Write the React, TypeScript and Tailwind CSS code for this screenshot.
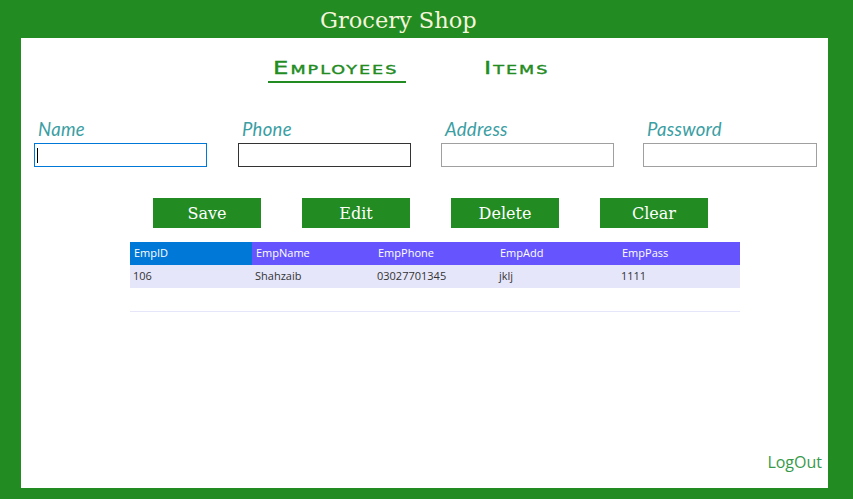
import React from "react";

const fields = [
  { label: "Name", left: "ml-[13px]", width: "w-[173px]", border: "border-[#0078d7]", caret: true },
  { label: "Phone", left: "ml-[31px]", width: "w-[173px]", border: "border-[#333333]", caret: false },
  { label: "Address", left: "ml-[30px]", width: "w-[173px]", border: "border-[#a0a0a0]", caret: false },
  { label: "Password", left: "ml-[29px]", width: "w-[174px]", border: "border-[#a0a0a0]", caret: false },
];

const buttons = ["Save", "Edit", "Delete", "Clear"];

const columns = ["EmpID", "EmpName", "EmpPhone", "EmpAdd", "EmpPass"];
const rows = [["106", "Shahzaib", "03027701345", "jklj", "1111"]];

const SmallCaps = ({ text }: { text: string }) => (
  <span className="inline-block origin-left scale-x-[1.35] [font-variant:small-caps] tracking-[1.5px] [-webkit-text-stroke:0.4px_#228b22] [font-family:'DejaVu_Sans',sans-serif] text-[18px] text-[#228b22]">
    {text}
  </span>
);

export default function App() {
  return (
    <div className="w-[853px] h-[499px] bg-[#228b22] flex flex-col overflow-hidden">
      <div className="h-[38px] pl-[320px] flex items-center">
        <h1 className="[font-family:'DejaVu_Serif',serif] text-[22.5px] text-[#f5f5dc] leading-none pt-[3px]">
          Grocery Shop
        </h1>
      </div>

      <div className="ml-[21px] w-[807px] h-[450px] bg-white flex flex-col relative">
        {/* tabs */}
        <div className="flex pt-[18px] h-[45px]">
          <div className="ml-[247px] w-[138px] flex flex-col">
            <div className="pl-[5px] h-[24px] leading-[24px]">
              <SmallCaps text="Employees" />
            </div>
            <div className="h-[2px] bg-[#228b22] mt-[1px]" />
          </div>
          <div className="ml-[78px] h-[24px] leading-[24px]">
            <SmallCaps text="Items" />
          </div>
        </div>

        {/* inputs */}
        <div className="flex mt-[36px]">
          {fields.map((f) => (
            <div key={f.label} className={`${f.left} ${f.width} flex flex-col`}>
              <label className="pl-[4px] h-[24px] italic tracking-[0.3px] [font-family:'Lato',sans-serif] text-[18.5px] leading-[21px] text-[#3a9ea3]">
                {f.label}
              </label>
              <div className={`h-[24px] border ${f.border} bg-white flex items-center`}>
                {f.caret && <div className="ml-[2px] w-[1px] h-[15px] bg-black" />}
              </div>
            </div>
          ))}
        </div>

        {/* buttons */}
        <div className="flex ml-[132px] mt-[31px] gap-[41px]">
          {buttons.map((b) => (
            <button
              key={b}
              className="w-[108px] h-[30px] bg-[#228b22] text-white [font-family:'DejaVu_Serif',serif] text-[16px] leading-none flex items-center justify-center pt-[1px]"
            >
              {b}
            </button>
          ))}
        </div>

        {/* grid */}
        <div className="ml-[109px] mt-[14px] w-[610px] h-[70px] border-b border-[#e6e6fa] [font-family:'Open_Sans',sans-serif] text-[11px]">
          <div className="flex h-[23px] bg-[#6655ff] text-white">
            {columns.map((c, i) => (
              <div
                key={c}
                className={`w-[122px] pl-[4px] flex items-center ${i === 0 ? "bg-[#0078d7]" : ""}`}
              >
                {c}
              </div>
            ))}
          </div>
          {rows.map((r, ri) => (
            <div key={ri} className="flex h-[23px] bg-[#e6e6fa] text-[#333333]">
              {r.map((v, i) => (
                <div key={i} className="w-[122px] pl-[3px] flex items-center">
                  {v}
                </div>
              ))}
            </div>
          ))}
        </div>

        <div className="mt-auto mb-[14px] mr-[6px] self-end [font-family:'Open_Sans',sans-serif] text-[16px] text-[#379a4a]">
          LogOut
        </div>
      </div>
    </div>
  );
}
